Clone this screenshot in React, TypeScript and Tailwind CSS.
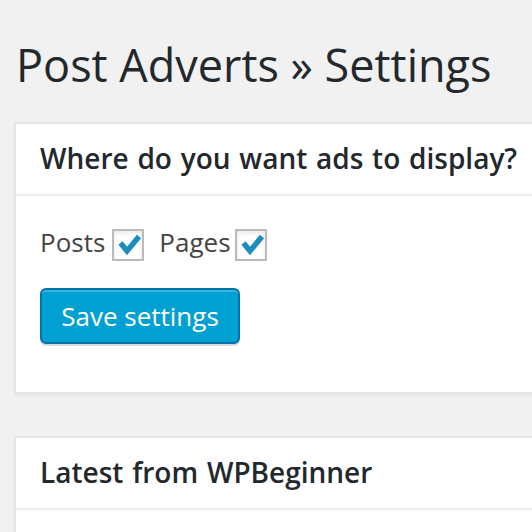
const FONT = { fontFamily: '"Open Sans", "Liberation Sans", sans-serif' };

function Check() {
  return (
    <span className="relative inline-block h-8 w-8 shrink-0 border-2 border-[#bbbbbb] bg-white shadow-[inset_0_2px_4px_rgba(0,0,0,0.1)]">
      <svg viewBox="0 0 32 32" className="absolute -left-[2px] -top-[2px] h-8 w-8">
        <polyline
          points="8.5,14 15,22 27,7.5"
          fill="none"
          stroke="#1e8cbe"
          strokeWidth="5.5"
          strokeLinejoin="miter"
        />
      </svg>
    </span>
  );
}

function Postbox({ title, children }: { title: string; children?: React.ReactNode }) {
  return (
    <div className="w-[580px] border-2 border-[#e5e5e5] bg-white shadow-[0_2px_2px_rgba(0,0,0,0.04)]">
      <h3 className="border-b-2 border-[#eeeeee] px-6 pb-[16px] pt-[14px] text-[28px] font-semibold leading-[40px] text-[#23282d] [word-spacing:1.5px]">
        {title}
      </h3>
      {children}
    </div>
  );
}

export default function App() {
  return (
    <div className="h-[532px] w-[532px] overflow-hidden bg-[#f1f1f1] pl-[14px]" style={FONT}>
      <h2 className="pl-[2px] pt-[35px] text-[45px] font-normal leading-[60px] text-[#23282d]">
        Post Adverts » Settings
      </h2>

      <div className="mt-[27px]">
        <Postbox title="Where do you want ads to display?">
          <div className="px-6 pb-[48px] pt-[33px]">
            <div className="flex h-8 items-start text-[26px] leading-[26px] text-[#444444]">
              <span>Posts</span>
              <span className="ml-[7px]"><Check /></span>
              <span className="ml-[15px]">Pages</span>
              <span className="ml-[4px]"><Check /></span>
            </div>
            <button
              type="button"
              className="mt-[27px] h-[56px] w-[200px] rounded-[6px] border-2 border-[#0073aa] bg-[#00a0d2] text-[26px] leading-[50px] text-white shadow-[inset_0_2px_0_rgba(120,200,230,0.5),0_2px_0_rgba(0,0,0,0.15)]"
            >
              Save settings
            </button>
          </div>
        </Postbox>
      </div>

      <div className="mt-[42px]">
        <Postbox title="Latest from WPBeginner">
          <div className="h-[200px]" />
        </Postbox>
      </div>
    </div>
  );
}
